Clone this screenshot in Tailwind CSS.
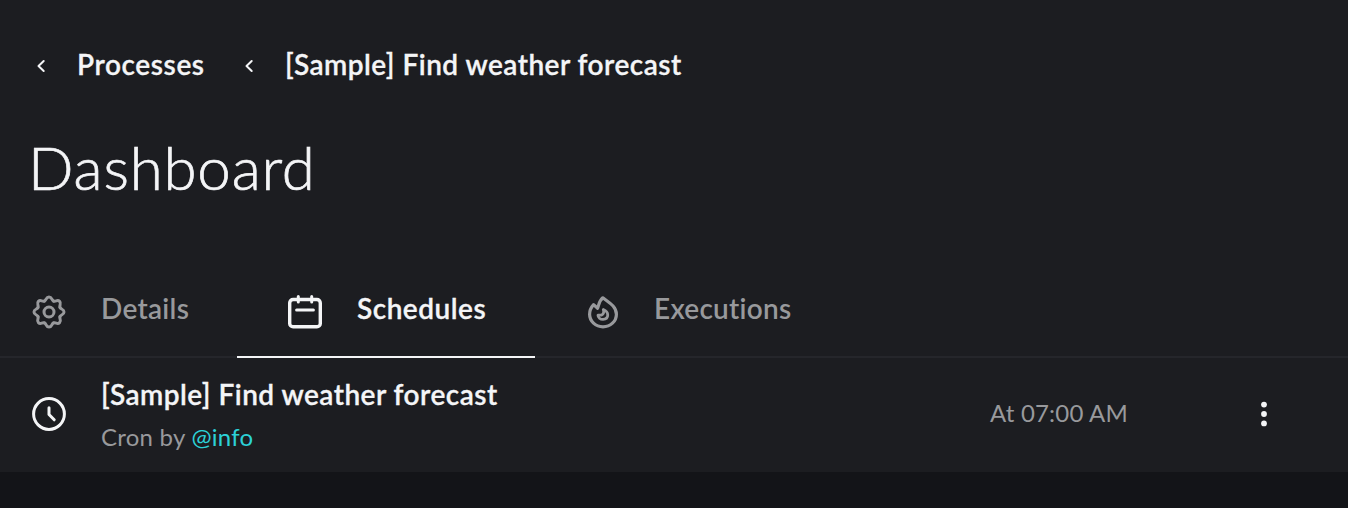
<!DOCTYPE html>
<html lang="en"><head><meta charset="utf-8"><title>Dashboard</title>
<script src="https://cdn.jsdelivr.net/npm/@tailwindcss/browser@4"></script></head>
<body class="bg-[#131418] h-[508px] overflow-hidden font-['Lato',sans-serif] text-[#f4f5f7] whitespace-nowrap">
<main class="bg-[#1c1d21] h-[472px] flex flex-col">
  <nav class="flex items-center h-[36px] mt-[46px] pl-[36px] text-[28px] font-semibold leading-[36px]">
    <svg class="w-[10px] h-[14px] mt-[4px]" viewBox="0 0 10 14" fill="none" stroke="currentColor" stroke-width="2" stroke-linecap="round" stroke-linejoin="round"><path d="M7.7 2 2.5 7l5.2 5"/></svg>
    <a class="ml-[31px] w-[167px] tracking-[0.6px] [-webkit-text-stroke:0.3px_#f4f5f7]">Processes</a>
    <svg class="w-[10px] h-[14px] mt-[4px]" viewBox="0 0 10 14" fill="none" stroke="currentColor" stroke-width="2" stroke-linecap="round" stroke-linejoin="round"><path d="M7.7 2 2.5 7l5.2 5"/></svg>
    <a class="ml-[31px] tracking-[0.48px] [-webkit-text-stroke:0.3px_#f4f5f7]">[Sample] Find weather forecast</a>
  </nav>
  <h1 class="mt-[47px] pl-[28px] h-[76px] leading-[76px] text-[60px] font-light tracking-[0.8px] [-webkit-text-stroke:0.7px_#f4f5f7]">Dashboard</h1>
  <div class="mt-[61px] h-[92px] flex border-b-2 border-[#25262b] text-[28px] font-semibold text-[#98999c]">
    <a class="w-[237px] h-[92px] flex pl-[31px]">
      <svg class="w-[36px] h-[36px] mt-[28px]" viewBox="-18 -18 36 36" fill="none" stroke="currentColor" stroke-width="3" stroke-linecap="round">
        <defs><path id="tooth" d="M-4.55-10.99C-2.15-11.99-3.2-15 0-15S2.15-11.99 4.55-10.99"/></defs>
        <use href="#tooth"/><use href="#tooth" transform="rotate(45)"/><use href="#tooth" transform="rotate(90)"/><use href="#tooth" transform="rotate(135)"/><use href="#tooth" transform="rotate(180)"/><use href="#tooth" transform="rotate(225)"/><use href="#tooth" transform="rotate(270)"/><use href="#tooth" transform="rotate(315)"/>
        <circle r="5"/></svg>
      <span class="ml-[34px] mt-[24px] leading-[36px] tracking-[0.3px]">Details</span>
    </a>
    <a class="w-[298px] h-[92px] flex pl-[50px] border-b-2 border-[#f4f5f7] text-[#f4f5f7]">
      <svg class="w-[36px] h-[36px] mt-[28px]" viewBox="0 0 36 36" fill="none" stroke="currentColor" stroke-width="3.4" stroke-linecap="round"><rect x="2.7" y="5.5" width="30.6" height="27.3" rx="3.4"/><path d="M11.3 2.5v5.6M24.7 2.5v5.6M9.6 16h16.8" stroke-width="3"/></svg>
      <span class="ml-[34px] mt-[24px] leading-[36px] tracking-[0.5px] [-webkit-text-stroke:0.3px_#f4f5f7]">Schedules</span>
    </a>
    <a class="flex pl-[50px]">
      <svg class="w-[36px] h-[36px] mt-[28px]" viewBox="0 0 36 36" fill="none" stroke="currentColor" stroke-width="3.2" stroke-linecap="round" stroke-linejoin="round"><path d="M17.8 3.8C23 8 31.4 12 31.4 20.2C31.4 27.4 25.4 32.8 18 32.8S4.6 27.2 4.6 20.2C4.6 16.6 6.2 13.2 8.6 10.6L12.6 14.2C14 10.6 14 7 17.8 3.8Z"/><path d="M18.3 15.5C24 17.5 24.5 25 18 25.4C15.2 25.4 13 23.5 13 21.2L16.6 21C18.6 20 19.2 18 18.3 15.5Z" stroke-width="2.8"/></svg>
      <span class="ml-[33px] mt-[24px] leading-[36px] tracking-[0.25px]">Executions</span>
    </a>
  </div>
  <section class="flex items-center h-[114px] pl-[31px]">
    <svg class="w-[36px] h-[36px] -mt-[2px]" viewBox="0 0 36 36" fill="none" stroke="currentColor" stroke-width="3" stroke-linecap="round" stroke-linejoin="round"><circle cx="18" cy="18" r="15.4"/><path d="M18 11.8v6.7l5.2 5.3"/></svg>
    <div class="ml-[34px] w-[889px] -mt-[2px]">
      <div class="text-[28px] leading-[36px] font-semibold tracking-[0.48px] [-webkit-text-stroke:0.3px_#f4f5f7]">[Sample] Find weather forecast</div>
      <div class="mt-[9px] text-[24px] leading-[32px] tracking-[0.25px] text-[#98999c]">Cron by <a class="text-[#2cd1d7]">@info</a></div>
    </div>
    <div class="w-[270px] -mt-[4px] text-[24px] leading-[32px] tracking-[0.2px] text-[#98999c]">At 07:00 AM</div>
    <svg class="w-[8px] h-[28px] -mt-[2px]" viewBox="0 0 8 28" fill="currentColor"><circle cx="4" cy="4.6" r="2.9"/><circle cx="4" cy="14" r="2.9"/><circle cx="4" cy="23.4" r="2.9"/></svg>
  </section>
</main>
</body></html>
